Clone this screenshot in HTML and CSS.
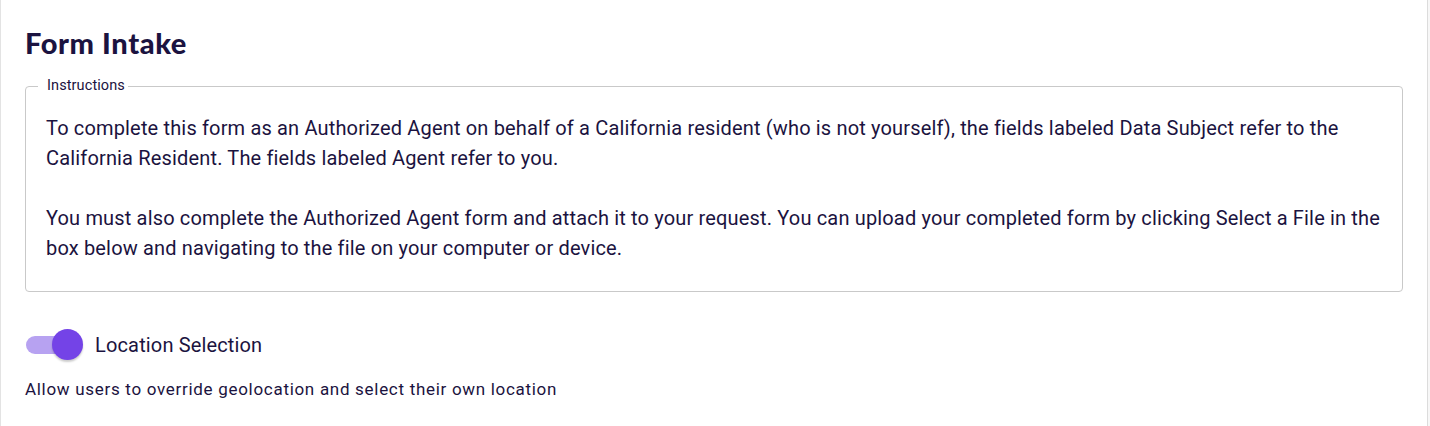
FILE: index.html
```html
<!DOCTYPE html>
<html>
<head>
<meta charset="utf-8">
<link rel="stylesheet" href="styles.css">
</head>
<body>
<div class="card">
  <h1 class="title">Form Intake</h1>
  <fieldset class="instructions">
    <legend class="legend">Instructions</legend>
    <p class="text">To complete this form as an Authorized Agent on behalf of a California resident (who is not yourself), the fields labeled Data Subject refer to the California Resident. The fields labeled Agent refer to you.</p>
    <p class="text">You must also complete the Authorized Agent form and attach it to your request. You can upload your completed form by clicking Select a File in the box below and navigating to the file on your computer or device.</p>
  </fieldset>
  <div class="toggle-row">
    <span class="switch"><span class="track"></span><span class="thumb"></span></span>
    <span class="toggle-label">Location Selection</span>
  </div>
  <p class="helper">Allow users to override geolocation and select their own location</p>
</div>
</body>
</html>
```
FILE: styles.css
```css
html, body {
  margin: 0;
  padding: 0;
  background: #ffffff;
}
body {
  width: 1430px;
  height: 426px;
  overflow: hidden;
  background: #f7f7f7;
  font-family: Roboto, "Liberation Sans", sans-serif;
  color: #1b1340;
}
.card {
  box-sizing: border-box;
  width: 1428px;
  height: 426px;
  background: #ffffff;
  border-left: 1px solid #e3e3e3;
  border-right: 1px solid #dcdcdc;
  padding: 26px 0 0 24px;
}
.title {
  margin: 0;
  font-family: Lato, "Noto Sans", sans-serif;
  font-weight: 900;
  font-size: 29px;
  line-height: 34px;
  letter-spacing: 0.6px;
  color: #1b1340;
}
.instructions {
  margin: 18px 0 0 0;
  width: 1378px;
  box-sizing: border-box;
  border: 1px solid #c9c9c9;
  border-radius: 4px;
  padding: 19px 16px 28px 20px;
  min-width: 0;
}
.legend {
  padding: 0 3px 0 9px;
  margin-left: -8px;
  font-size: 14.5px;
  line-height: 16px;
  letter-spacing: 0.1px;
  color: #1b1340;
}
.text {
  margin: 0;
  font-size: 20px;
  line-height: 30px;
  letter-spacing: 0.16px;
}
.text + .text {
  margin-top: 30px;
}
.toggle-row {
  display: flex;
  align-items: center;
  gap: 11px;
  margin-top: 37px;
  height: 32px;
}
.switch {
  position: relative;
  width: 59px;
  height: 32px;
  flex: none;
}
.track {
  position: absolute;
  left: 1px;
  top: 7px;
  width: 48px;
  height: 18px;
  border-radius: 9px;
  background: #b7a2f1;
}
.thumb {
  position: absolute;
  left: 27px;
  top: 0px;
  width: 31px;
  height: 31px;
  border-radius: 50%;
  background: #7443e7;
  box-shadow: 0 2px 2px rgba(0,0,0,0.2);
}
.toggle-label {
  font-size: 20px;
  line-height: 24px;
  letter-spacing: 0.15px;
  color: #1b1340;
}
.helper {
  margin: 18px 0 0 0;
  font-size: 17px;
  line-height: 20px;
  letter-spacing: 0.7px;
  color: #1b1340;
}
```
